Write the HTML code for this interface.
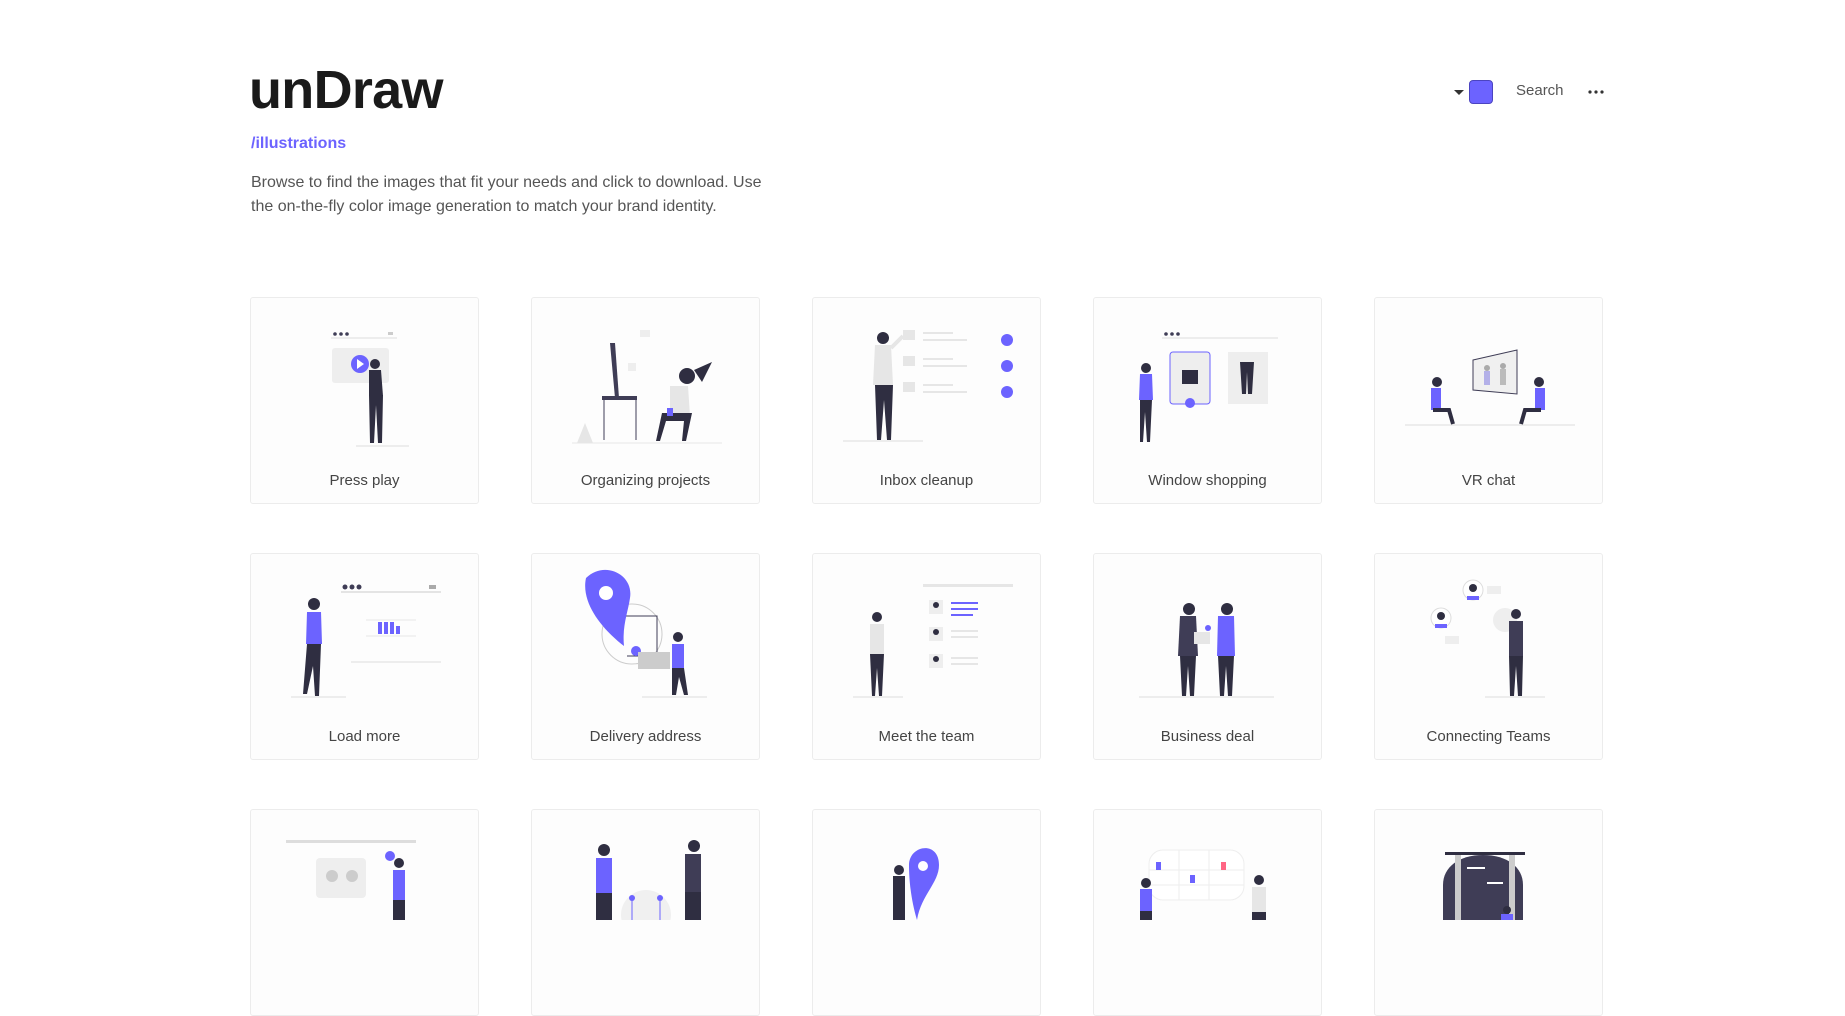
<!DOCTYPE html>
<html><head><meta charset="utf-8"><style>
*{margin:0;padding:0;box-sizing:border-box}
body{width:1845px;height:919px;overflow:hidden;background:#fff;font-family:"Liberation Sans",sans-serif;position:relative}
.logo{position:absolute;left:249px;top:59px;font-size:54px;font-weight:bold;color:#1a1a1a;letter-spacing:-0.7px}
.sub{position:absolute;left:251px;top:135px;font-size:16px;font-weight:bold;color:#6c63ff}
.p{position:absolute;left:251px;top:171px;font-size:16px;line-height:24px;color:#555;width:600px}
.card{position:absolute;width:229px;height:207px;border:1px solid #ececec;border-radius:3px;background:#fdfdfd}
.card svg{position:absolute;left:0;top:0}
.card span{position:absolute;left:0;right:0;top:174px;text-align:center;font-size:15px;color:#444}
.nav{position:absolute;top:80px}
</style></head><body>
<div class="logo">unDraw</div>
<div class="sub">/illustrations</div>
<div class="p">Browse to find the images that fit your needs and click to download. Use<br>the on-the-fly color image generation to match your brand identity.</div>
<svg class="nav" style="left:1452px" width="16" height="24"><path d="M2 10h10l-5 5z" fill="#333"/></svg>
<div class="nav" style="left:1469px;width:24px;height:24px;background:#6c63ff;border-radius:4px;border:1px solid #4b44c0"></div>
<div class="nav" style="left:1516px;top:82px;font-size:15px;color:#555">Search</div>
<svg class="nav" style="left:1586px" width="20" height="24"><circle cx="4" cy="12" r="1.6" fill="#333"/><circle cx="10" cy="12" r="1.6" fill="#333"/><circle cx="16" cy="12" r="1.6" fill="#333"/></svg>

<!-- Row 1 -->
<div class="card" style="left:250px;top:297px"><svg width="229" height="170">
<circle cx="84" cy="36" r="1.8" fill="#3f3d56"/><circle cx="90" cy="36" r="1.8" fill="#3f3d56"/><circle cx="96" cy="36" r="1.8" fill="#3f3d56"/><line x1="80" y1="40" x2="146" y2="40" stroke="#ddd"/><rect x="137" y="34" width="5" height="3" fill="#ccc"/>
<rect x="81" y="50" width="57" height="35" rx="3" fill="#eee"/><circle cx="109" cy="66" r="9" fill="#6c63ff"/><path d="M106 61l7 5-7 5z" fill="#fff"/>
<circle cx="124" cy="66" r="5" fill="#2f2e41"/><path d="M118 72h12l2 26h-14z" fill="#2f2e41"/><path d="M118 97h14l-1 48h-4l-2-38-2 38h-4z" fill="#2f2e41"/><line x1="105" y1="148" x2="158" y2="148" stroke="#ddd"/></svg><span>Press play</span></div>
<div class="card" style="left:531px;top:297px"><svg width="229" height="170">
<path d="M78 45l5 55h4l-4-55z" fill="#3f3d56"/><rect x="70" y="98" width="35" height="4" fill="#3f3d56"/><line x1="72" y1="102" x2="72" y2="142" stroke="#3f3d56"/><line x1="104" y1="102" x2="104" y2="142" stroke="#3f3d56"/>
<rect x="108" y="32" width="10" height="7" fill="#eee"/><rect x="96" y="65" width="8" height="8" fill="#eee"/>
<circle cx="155" cy="78" r="8" fill="#2f2e41"/><path d="M162 72l18-8-10 20z" fill="#2f2e41"/><path d="M138 88h18l2 30h-20z" fill="#e6e6e6"/><path d="M130 115h30l-6 28h-4l2-20h-18l-6 20h-4z" fill="#2f2e41"/><rect x="135" y="110" width="6" height="8" fill="#6c63ff"/>
<path d="M45 145l8-20 8 20z" fill="#e6e6e6"/><line x1="40" y1="145" x2="190" y2="145" stroke="#e6e6e6"/></svg><span>Organizing projects</span></div>
<div class="card" style="left:812px;top:297px"><svg width="229" height="170">
<circle cx="70" cy="40" r="6" fill="#2f2e41"/><path d="M62 47h16l2 40h-20z" fill="#e6e6e6"/><path d="M78 50l12-12" stroke="#e6e6e6" stroke-width="4"/><path d="M62 87h18l-2 55h-4l-3-40-3 40h-4z" fill="#2f2e41"/>
<rect x="90" y="32" width="12" height="10" fill="#e6e6e6"/><rect x="90" y="58" width="12" height="10" fill="#e6e6e6"/><rect x="90" y="84" width="12" height="10" fill="#e6e6e6"/>
<g stroke="#e6e6e6" stroke-width="2"><line x1="110" y1="35" x2="140" y2="35"/><line x1="110" y1="42" x2="154" y2="42"/><line x1="110" y1="61" x2="140" y2="61"/><line x1="110" y1="68" x2="154" y2="68"/><line x1="110" y1="87" x2="140" y2="87"/><line x1="110" y1="94" x2="154" y2="94"/></g>
<circle cx="194" cy="42" r="6" fill="#6c63ff"/><circle cx="194" cy="68" r="6" fill="#6c63ff"/><circle cx="194" cy="94" r="6" fill="#6c63ff"/><line x1="30" y1="143" x2="110" y2="143" stroke="#ddd"/></svg><span>Inbox cleanup</span></div>
<div class="card" style="left:1093px;top:297px"><svg width="229" height="170">
<circle cx="72" cy="36" r="1.8" fill="#3f3d56"/><circle cx="78" cy="36" r="1.8" fill="#3f3d56"/><circle cx="84" cy="36" r="1.8" fill="#3f3d56"/><line x1="68" y1="40" x2="184" y2="40" stroke="#ddd"/>
<rect x="76" y="54" width="40" height="52" rx="3" fill="#eee" stroke="#6c63ff"/><path d="M88 72h16v14h-16z" fill="#2f2e41"/><circle cx="96" cy="105" r="5" fill="#6c63ff"/>
<rect x="134" y="54" width="40" height="52" fill="#eee"/><path d="M146 64h14l-2 32h-4l-1-22-1 22h-4z" fill="#2f2e41"/>
<circle cx="52" cy="70" r="5" fill="#2f2e41"/><path d="M46 76h12l1 26h-14z" fill="#6c63ff"/><path d="M46 102h12l-2 42h-3l-2-30-2 30h-3z" fill="#2f2e41"/></svg><span>Window shopping</span></div>
<div class="card" style="left:1374px;top:297px"><svg width="229" height="170">
<path d="M98 62l44-10v44l-44-4z" fill="#f0f0f0" stroke="#3f3d56"/><circle cx="112" cy="70" r="3" fill="#aaa"/><rect x="109" y="73" width="6" height="14" fill="#b3b0e8"/><circle cx="128" cy="68" r="3" fill="#aaa"/><rect x="125" y="71" width="6" height="16" fill="#bbb"/>
<circle cx="62" cy="84" r="5" fill="#2f2e41"/><path d="M56 90h10v22h-10z" fill="#6c63ff"/><path d="M58 112h16l4 14" stroke="#2f2e41" stroke-width="4" fill="none"/>
<circle cx="164" cy="84" r="5" fill="#2f2e41"/><path d="M160 90h10v22h-10z" fill="#6c63ff"/><path d="M166 112h-16l-4 14" stroke="#2f2e41" stroke-width="4" fill="none"/><line x1="30" y1="127" x2="200" y2="127" stroke="#ddd"/></svg><span>VR chat</span></div>

<!-- Row 2 -->
<div class="card" style="left:250px;top:553px"><svg width="229" height="170">
<circle cx="94" cy="33" r="2.5" fill="#3f3d56"/><circle cx="101" cy="33" r="2.5" fill="#3f3d56"/><circle cx="108" cy="33" r="2.5" fill="#3f3d56"/><line x1="90" y1="38" x2="190" y2="38" stroke="#ccc"/><rect x="178" y="31" width="7" height="4" fill="#aaa"/>
<g fill="#6c63ff"><rect x="127" y="68" width="4" height="12"/><rect x="133" y="68" width="4" height="12"/><rect x="139" y="68" width="4" height="12"/><rect x="145" y="72" width="4" height="8"/></g><line x1="115" y1="66" x2="165" y2="66" stroke="#e6e6e6"/><line x1="115" y1="82" x2="165" y2="82" stroke="#e6e6e6"/><line x1="100" y1="108" x2="190" y2="108" stroke="#ddd"/>
<circle cx="63" cy="50" r="6" fill="#2f2e41"/><path d="M56 58h14l1 32h-16z" fill="#6c63ff"/><path d="M56 90h14l-2 52h-4l-2-30-6 28h-4z" fill="#2f2e41"/><line x1="40" y1="143" x2="95" y2="143" stroke="#ddd"/></svg><span>Load more</span></div>
<div class="card" style="left:531px;top:553px"><svg width="229" height="170">
<circle cx="100" cy="80" r="30" fill="none" stroke="#ccc"/><path d="M80 62h45v40h-30" stroke="#3f3d56" fill="none"/>
<path d="M54 24c18-18 48-4 44 20-2 14-8 28-6 48-16-12-44-40-38-68z" fill="#6c63ff"/><circle cx="74" cy="39" r="7" fill="#fff"/><circle cx="104" cy="97" r="5" fill="#6c63ff"/>
<rect x="106" y="98" width="32" height="17" fill="#ccc"/><circle cx="146" cy="83" r="5" fill="#2f2e41"/><path d="M140 90h12v25h-12z" fill="#6c63ff"/><path d="M140 114h12l4 27h-4l-5-18-3 18h-4z" fill="#2f2e41"/><line x1="110" y1="143" x2="175" y2="143" stroke="#ddd"/></svg><span>Delivery address</span></div>
<div class="card" style="left:812px;top:553px"><svg width="229" height="170">
<rect x="110" y="30" width="90" height="3" fill="#e6e6e6"/><rect x="116" y="46" width="14" height="14" fill="#eee"/><circle cx="123" cy="51" r="3" fill="#2f2e41"/><rect x="116" y="73" width="14" height="14" fill="#eee"/><circle cx="123" cy="78" r="3" fill="#2f2e41"/><rect x="116" y="100" width="14" height="14" fill="#eee"/><circle cx="123" cy="105" r="3" fill="#2f2e41"/>
<g stroke="#6c63ff" stroke-width="2"><line x1="138" y1="49" x2="165" y2="49"/><line x1="138" y1="55" x2="165" y2="55"/><line x1="138" y1="61" x2="160" y2="61"/></g><g stroke="#e6e6e6" stroke-width="2"><line x1="138" y1="77" x2="165" y2="77"/><line x1="138" y1="83" x2="165" y2="83"/><line x1="138" y1="104" x2="165" y2="104"/><line x1="138" y1="110" x2="165" y2="110"/></g>
<circle cx="64" cy="63" r="5" fill="#2f2e41"/><path d="M57 70h14v30h-14z" fill="#e6e6e6"/><path d="M57 100h14l-2 42h-3l-2-28-2 28h-3z" fill="#2f2e41"/><line x1="40" y1="143" x2="90" y2="143" stroke="#ddd"/></svg><span>Meet the team</span></div>
<div class="card" style="left:1093px;top:553px"><svg width="229" height="170">
<circle cx="95" cy="55" r="6" fill="#2f2e41"/><path d="M86 62h16l2 40h-20z" fill="#3f3d56"/><path d="M86 102h16l-2 40h-4l-2-30-2 30h-4z" fill="#2f2e41"/>
<circle cx="133" cy="55" r="6" fill="#2f2e41"/><path d="M124 62h16l1 40h-18z" fill="#6c63ff"/><path d="M124 102h16l-2 40h-4l-2-30-2 30h-4z" fill="#2f2e41"/><rect x="100" y="78" width="16" height="12" fill="#e6e6e6"/><circle cx="114" cy="74" r="3" fill="#6c63ff"/>
<line x1="45" y1="143" x2="180" y2="143" stroke="#ddd"/></svg><span>Business deal</span></div>
<div class="card" style="left:1374px;top:553px"><svg width="229" height="170">
<circle cx="98" cy="36" r="10" fill="#fff" stroke="#ddd"/><circle cx="98" cy="34" r="4" fill="#2f2e41"/><path d="M92 42h12v4h-12z" fill="#6c63ff"/><rect x="112" y="32" width="14" height="8" fill="#eee"/>
<circle cx="66" cy="64" r="10" fill="#fff" stroke="#ddd"/><circle cx="66" cy="62" r="4" fill="#2f2e41"/><path d="M60 70h12v4h-12z" fill="#6c63ff"/><rect x="70" y="82" width="14" height="8" fill="#eee"/>
<circle cx="130" cy="66" r="12" fill="#eee"/><circle cx="141" cy="60" r="5" fill="#2f2e41"/><path d="M134 67h14v35h-14z" fill="#3f3d56"/><path d="M134 102h14l-1 40h-4l-2-30-2 30h-4z" fill="#2f2e41"/><line x1="110" y1="143" x2="170" y2="143" stroke="#ddd"/></svg><span>Connecting Teams</span></div>

<!-- Row 3 -->
<div class="card" style="left:250px;top:809px"><svg width="229" height="110">
<rect x="35" y="30" width="130" height="3" fill="#ddd"/><rect x="65" y="48" width="50" height="40" rx="4" fill="#eee"/><circle cx="81" cy="66" r="6" fill="#ccc"/><circle cx="101" cy="66" r="6" fill="#ccc"/>
<circle cx="139" cy="46" r="5" fill="#6c63ff"/><circle cx="148" cy="53" r="5" fill="#2f2e41"/><path d="M142 60h12v30h-12z" fill="#6c63ff"/><path d="M142 90h12v20h-12z" fill="#2f2e41"/></svg></div>
<div class="card" style="left:531px;top:809px"><svg width="229" height="110">
<circle cx="114" cy="105" r="25" fill="#f0f0f0"/><circle cx="72" cy="40" r="6" fill="#2f2e41"/><path d="M64 48h16v35h-16z" fill="#6c63ff"/><path d="M64 83h16v27h-16z" fill="#2f2e41"/>
<circle cx="162" cy="36" r="6" fill="#2f2e41"/><path d="M153 44h16v38h-16z" fill="#3f3d56"/><path d="M153 82h16v28h-16z" fill="#2f2e41"/><circle cx="100" cy="88" r="3" fill="#6c63ff"/><circle cx="128" cy="88" r="3" fill="#6c63ff"/><line x1="100" y1="88" x2="100" y2="110" stroke="#6c63ff"/><line x1="128" y1="88" x2="128" y2="110" stroke="#6c63ff"/></svg></div>
<div class="card" style="left:812px;top:809px"><svg width="229" height="110">
<path d="M96 55c0-20 30-25 30 0 0 18-18 30-22 55-6-20-8-40-8-55z" fill="#6c63ff"/><circle cx="110" cy="56" r="5" fill="#fff"/><circle cx="86" cy="60" r="5" fill="#2f2e41"/><path d="M80 66h12v44h-12z" fill="#2f2e41"/></svg></div>
<div class="card" style="left:1093px;top:809px"><svg width="229" height="110">
<rect x="55" y="40" width="95" height="50" rx="14" fill="#fff" stroke="#eee"/><g stroke="#eee"><line x1="55" y1="60" x2="150" y2="60"/><line x1="55" y1="75" x2="150" y2="75"/><line x1="85" y1="40" x2="85" y2="90"/><line x1="115" y1="40" x2="115" y2="90"/></g>
<rect x="62" y="52" width="5" height="8" fill="#6c63ff"/><rect x="96" y="65" width="5" height="8" fill="#6c63ff"/><rect x="127" y="52" width="5" height="8" fill="#ff6584"/>
<circle cx="52" cy="73" r="5" fill="#2f2e41"/><path d="M46 79h12v22h-12z" fill="#6c63ff"/><path d="M46 101h12v9h-12z" fill="#2f2e41"/><circle cx="165" cy="70" r="5" fill="#2f2e41"/><path d="M158 77h14v25h-14z" fill="#e6e6e6"/><path d="M158 102h14v8h-14z" fill="#2f2e41"/></svg></div>
<div class="card" style="left:1374px;top:809px"><svg width="229" height="110">
<path d="M68 110v-35c0-18 16-30 40-30s40 12 40 30v35z" fill="#3f3d56"/><rect x="70" y="42" width="80" height="3" fill="#2f2e41"/><rect x="80" y="45" width="6" height="65" fill="#ccc"/><rect x="134" y="45" width="6" height="65" fill="#ccc"/>
<path d="M92 58h18" stroke="#fff" stroke-width="2"/><path d="M112 73h16" stroke="#fff" stroke-width="2"/><circle cx="132" cy="100" r="4" fill="#2f2e41"/><path d="M126 104h12v6h-12z" fill="#6c63ff"/></svg></div>
</body></html>
